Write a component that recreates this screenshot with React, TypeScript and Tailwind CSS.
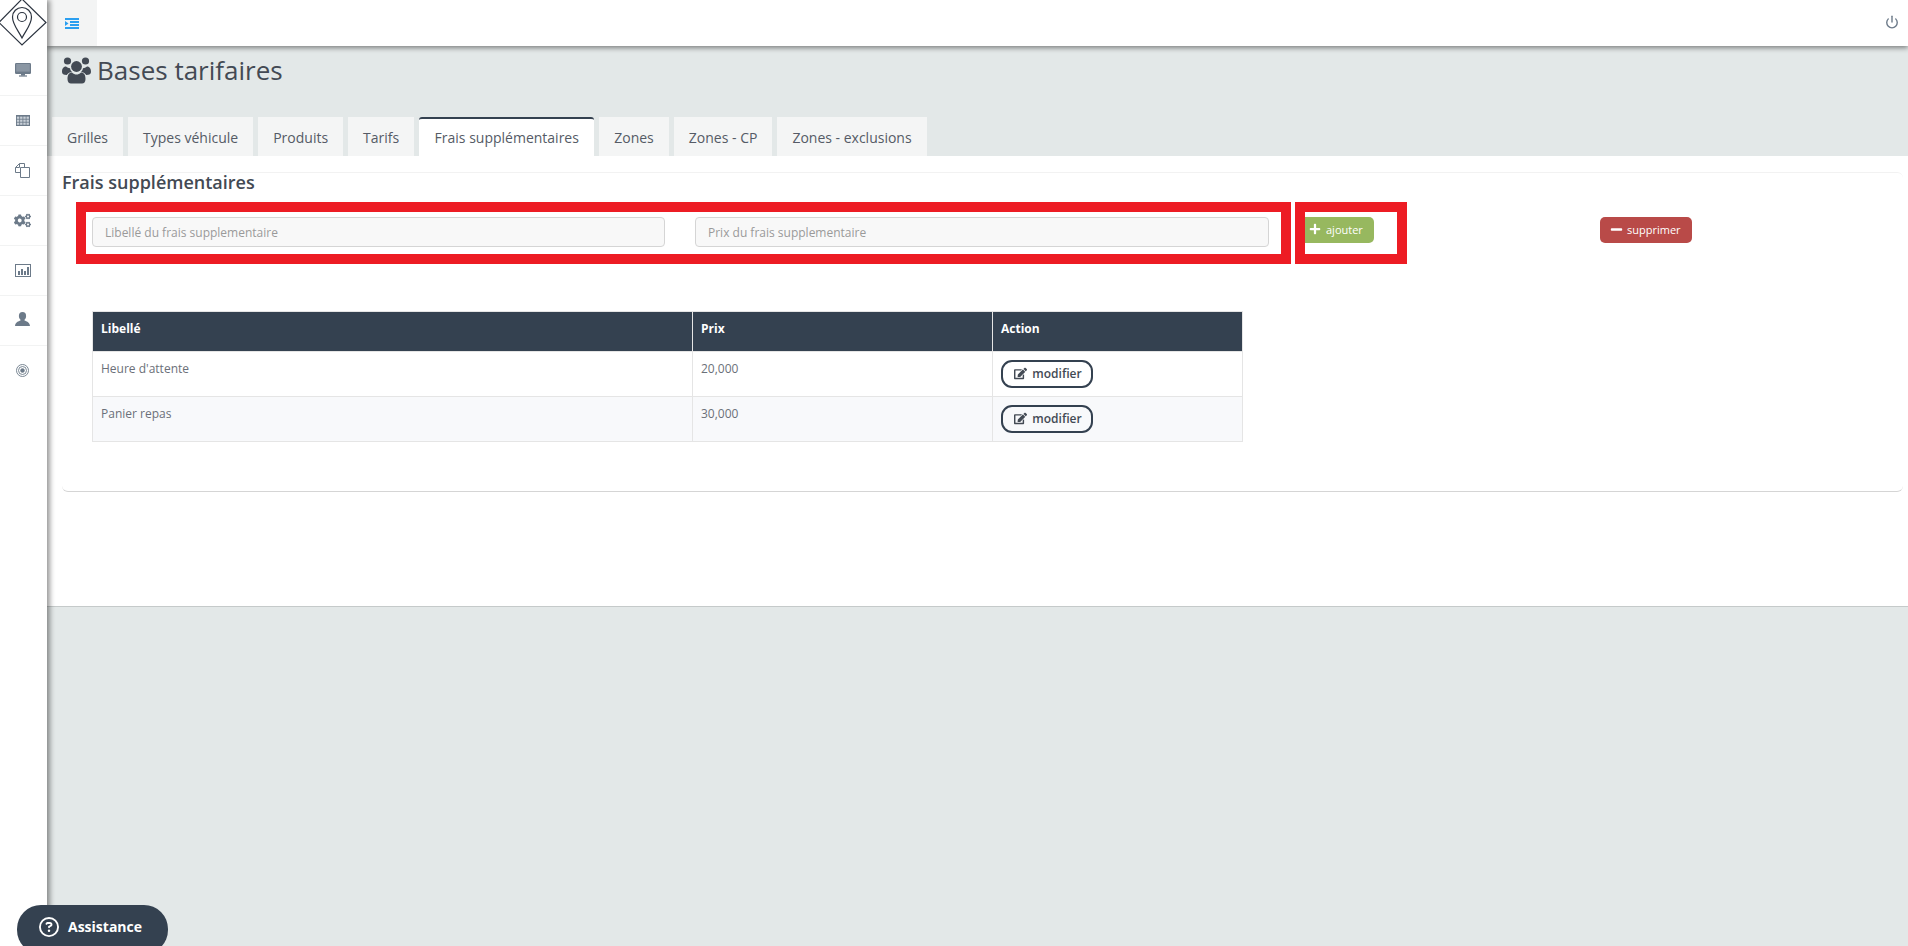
import React from "react";
import { FaCogs, FaPlus, FaMinus, FaEdit } from "react-icons/fa";
import { FiPower } from "react-icons/fi";
import { FaRegCircleQuestion } from "react-icons/fa6";

const c = "#6c7a89";
const DesktopI = () => (
  <svg width="16" height="14" viewBox="0 0 16 14" className="-mt-[1px]">
    <rect x="0" y="0" width="16" height="11" rx="1.2" fill={c} />
    <rect x="1.2" y="1" width="13.6" height="7.6" fill="#8a96a3" />
    <rect x="6" y="11" width="4" height="1.6" fill={c} />
    <rect x="4" y="12.4" width="8" height="1.2" fill={c} />
  </svg>
);
const TableI = () => (
  <svg width="14" height="11" viewBox="0 0 14 11">
    <rect width="14" height="11" fill={c} />
    <g fill="#c9d0d8">
      {[0, 1, 2, 3].flatMap((x) => [0, 1, 2].map((y) => (
        <rect key={`${x}-${y}`} x={0.9 + x * 3.2} y={1.6 + y * 3} width="2.4" height="2.2" />
      )))}
    </g>
  </svg>
);
const FilesI = () => (
  <svg width="15" height="15" viewBox="0 0 15 15" fill="#fff" stroke={c} strokeWidth="1">
    <path d="M0.5 9.5 V4.5 L4.5 0.5 H9.5 V9.5 Z" />
    <path d="M0.5 4.5 H4.5 V0.5" fill="none" />
    <path d="M5.5 4.5 H14.5 V14.5 H5.5 Z" />
  </svg>
);
const ChartI = () => (
  <svg width="16" height="13" viewBox="0 0 16 13" fill="none">
    <rect x="0.5" y="0.5" width="15" height="12" stroke={c} />
    <g fill={c}>
      <rect x="3" y="7" width="2" height="4" />
      <rect x="6" y="5" width="2" height="6" />
      <rect x="9" y="7" width="2" height="4" />
      <rect x="12" y="3" width="2" height="8" />
    </g>
  </svg>
);
const UserI = () => (
  <svg width="15" height="14" viewBox="0 0 15 14" fill={c} className="-mt-[3px]">
    <ellipse cx="7.5" cy="4" rx="3.6" ry="4" />
    <path d="M5.5 7 L5.5 8.6 C3.5 9.6 0.5 10 0 14 H15 C14.5 10 11.5 9.6 9.5 8.6 L9.5 7 Z" />
  </svg>
);
const TargetI = () => (
  <svg width="13" height="13" viewBox="0 0 13 13" fill="none" stroke={c} className="-mt-[1px]">
    <circle cx="6.5" cy="6.5" r="6" strokeWidth="0.9" />
    <circle cx="6.5" cy="6.5" r="4" strokeWidth="0.9" />
    <circle cx="6.5" cy="6.5" r="2" fill={c} strokeWidth="0.5" />
  </svg>
);
const CogsI = () => <FaCogs className="text-[17px]" color={c} />;

const navIcons = [DesktopI, TableI, FilesI, CogsI, ChartI, UserI, TargetI];
const tabs = ["Grilles", "Types véhicule", "Produits", "Tarifs", "Frais supplémentaires", "Zones", "Zones - CP", "Zones - exclusions"];
const rows = [
  { label: "Heure d'attente", price: "20,000", bg: "bg-white" },
  { label: "Panier repas", price: "30,000", bg: "bg-[#f8f9fb]" },
];

function Logo() {
  return (
    <svg width="47" height="46" viewBox="0 0 47 46" fill="none" stroke="#2c3440" strokeWidth="1.2">
      <path d="M22 -1 L46 22.5 L22 45 L-1 22.5 Z" />
      <path d="M22 38 C18 30 12.5 24.5 12.5 17 A9.5 9.5 0 0 1 31.5 17 C31.5 24.5 26 30 22 38 Z" />
      <circle cx="22" cy="17" r="4.5" />
    </svg>
  );
}

const UsersI = () => (
  <svg width="29" height="27" viewBox="0 0 29 27" fill="#434a54">
    <circle cx="5.5" cy="4" r="3.6" />
    <circle cx="23.5" cy="4" r="3.6" />
    <circle cx="14.5" cy="9.5" r="5.4" />
    <path d="M0 15 C0 11 2 9.6 4 9.6 C5.5 11 6.5 11.2 8 11.2 C8.4 13 9 14 10 15 C7.5 15.2 5.6 16.4 4.8 18 C1.5 18 0 17 0 15 Z" />
    <path d="M29 15 C29 11 27 9.6 25 9.6 C23.5 11 22.5 11.2 21 11.2 C20.6 13 20 14 19 15 C21.5 15.2 23.4 16.4 24.2 18 C27.5 18 29 17 29 15 Z" />
    <path d="M5.5 22 C5.5 18 7 15.6 10 15.6 C11.5 17 13 17.6 14.5 17.6 C16 17.6 17.5 17 19 15.6 C22 15.6 23.5 18 23.5 22 C23.5 25 22 26.5 20 26.5 H9 C7 26.5 5.5 25 5.5 22 Z" />
  </svg>
);

const ToggleI = () => (
  <svg width="14" height="11" viewBox="0 0 14 11" fill="#2b9ff0">
    <rect x="0" y="0" width="14" height="2" />
    <rect x="5" y="3" width="9" height="2" />
    <rect x="5" y="6" width="9" height="2" />
    <rect x="0" y="9" width="14" height="2" />
    <path d="M0 3 L3.5 5.5 L0 8 Z" />
  </svg>
);

export default function App() {
  return (
    <div className="relative flex h-[946px] w-[1908px] overflow-hidden bg-[#e3e8e8] font-['Open_Sans','Noto_Sans',sans-serif]">
      <aside className="relative z-20 flex w-[47px] shrink-0 flex-col bg-white shadow-[3px_0_5px_rgba(0,0,0,0.4)]">
        <div className="h-[46px]"><Logo /></div>
        {navIcons.map((Icon, i) => (
          <div key={i} className={i === navIcons.length - 1 ? "flex h-[50px] items-center justify-center pr-[2px]" : "flex h-[50px] items-center justify-center border-b border-[#f2f3f3] pr-[2px]"}>
            <Icon />
          </div>
        ))}
      </aside>

      <main className="flex min-w-0 flex-1 flex-col">
        <header className="relative z-10 flex h-[46px] shrink-0 items-center justify-between bg-white pr-[9px] shadow-[0_2px_5px_rgba(0,0,0,0.45)]">
          <div className="flex h-[46px] w-[50px] items-center justify-center bg-[#f3f4f4]">
            <ToggleI />
          </div>
          <FiPower className="-mt-[2px] text-[14px] text-[#6c7a89]" strokeWidth={2.4} />
        </header>

        <div className="flex h-[71px] shrink-0 items-start pl-[15px] pt-[11px] text-[#434a54]">
          <UsersI />
          <h1 className="ml-[6px] -mt-[5px] text-[26px] leading-[36px] font-normal">Bases tarifaires</h1>
        </div>

        <nav className="flex h-[39px] shrink-0 gap-[5px] pl-[5px]">
          {tabs.map((t) => (
            <div
              key={t}
              className={
                t === "Frais supplémentaires"
                  ? "flex h-[39px] w-[175px] items-center justify-center rounded-t-[3px] border-t-2 border-[#344150] bg-white text-[14px] text-[#555b66]"
                  : "flex h-[39px] items-center bg-[#f4f5f5] px-[15px] pt-[2px] text-[14px] text-[#555b66]"
              }
            >
              {t}
            </div>
          ))}
        </nav>

        <section className="h-[451px] shrink-0 border-b border-[#c5caca] bg-white pt-[16px] pl-[15px] pr-[5px]">
          <div className="h-[320px] rounded-[6px] border-t border-b border-[#f2f2f2] border-b-[#d5d5d5]">
            <h2 className="-mt-[1px] h-[30px] text-[18px] leading-[20px] font-semibold text-[#434a54]">Frais supplémentaires</h2>
            <div className="flex h-[62px] pl-[14px]">
              <div className="flex h-[62px] w-[1215px] items-start gap-[30px] border-[10px] border-[#ed1c24] pt-[5px] pl-[6px]">
                <input placeholder="Libellé du frais supplementaire" className="h-[30px] w-[573px] rounded-[4px] border border-[#d5d5d5] bg-[#f8f8f8] px-[12px] text-[12px] outline-none placeholder:text-[#9a9a9a]" />
                <input placeholder="Prix du frais supplementaire" className="h-[30px] w-[574px] rounded-[4px] border border-[#d5d5d5] bg-[#f8f8f8] px-[12px] text-[12px] outline-none placeholder:text-[#9a9a9a]" />
              </div>
              <div className="ml-[4px] h-[62px] w-[112px] border-[10px] border-[#ed1c24] pt-[5px]">
                <button className="flex h-[26px] w-[69px] items-center gap-[5px] rounded-r-[5px] bg-[#97b85f] pl-[4px] text-[11px] text-white">
                  <FaPlus className="-mt-[2px] text-[12px]" /> ajouter
                </button>
              </div>
              <div className="ml-[193px] pt-[15px]">
                <button className="flex h-[26px] w-[92px] items-center gap-[4px] rounded-[5px] bg-[#b94a48] pl-[10px] text-[11px] text-white">
                  <FaMinus className="-mt-[2px] text-[13px]" /> supprimer
                </button>
              </div>
            </div>

            <div className="pt-[47px] pl-[30px]">
              <table className="w-[1150px] table-fixed border-collapse text-[12px]">
                <colgroup>
                  <col className="w-[600px]" />
                  <col className="w-[300px]" />
                  <col className="w-[250px]" />
                </colgroup>
                <thead>
                  <tr className="h-[40px] bg-[#344150] text-white">
                    {["Libellé", "Prix", "Action"].map((h) => (
                      <th key={h} className="border border-[#e5e5e5] px-[8px] pb-[6px] text-left align-middle text-[12px] font-bold">{h}</th>
                    ))}
                  </tr>
                </thead>
                <tbody>
                  {rows.map((r) => (
                    <tr key={r.label} className={`h-[45px] ${r.bg} text-[#6b7079]`}>
                      <td className="border border-[#e5e5e5] px-[8px] pt-[8px] align-top">{r.label}</td>
                      <td className="border border-[#e5e5e5] px-[8px] pt-[8px] align-top">{r.price}</td>
                      <td className="border border-[#e5e5e5] px-[8px] align-top pt-[8px]">
                        <button className="flex h-[28px] w-[92px] items-center justify-center gap-[5px] rounded-[11px] border-2 border-[#344150] bg-transparent pl-[2px] text-[12px] font-semibold text-[#434a54]">
                          <FaEdit className="-mt-[2px] text-[13px]" /> modifier
                        </button>
                      </td>
                    </tr>
                  ))}
                </tbody>
              </table>
            </div>
          </div>
        </section>
      </main>

      <button className="absolute bottom-[-8px] left-[17px] z-30 flex h-[49px] w-[151px] items-center rounded-[24px] bg-[#344150] pb-[6px] pl-[22px] text-[14px] font-bold text-white">
        <FaRegCircleQuestion className="mr-[9px] text-[20px]" /> Assistance
      </button>
    </div>
  );
}
